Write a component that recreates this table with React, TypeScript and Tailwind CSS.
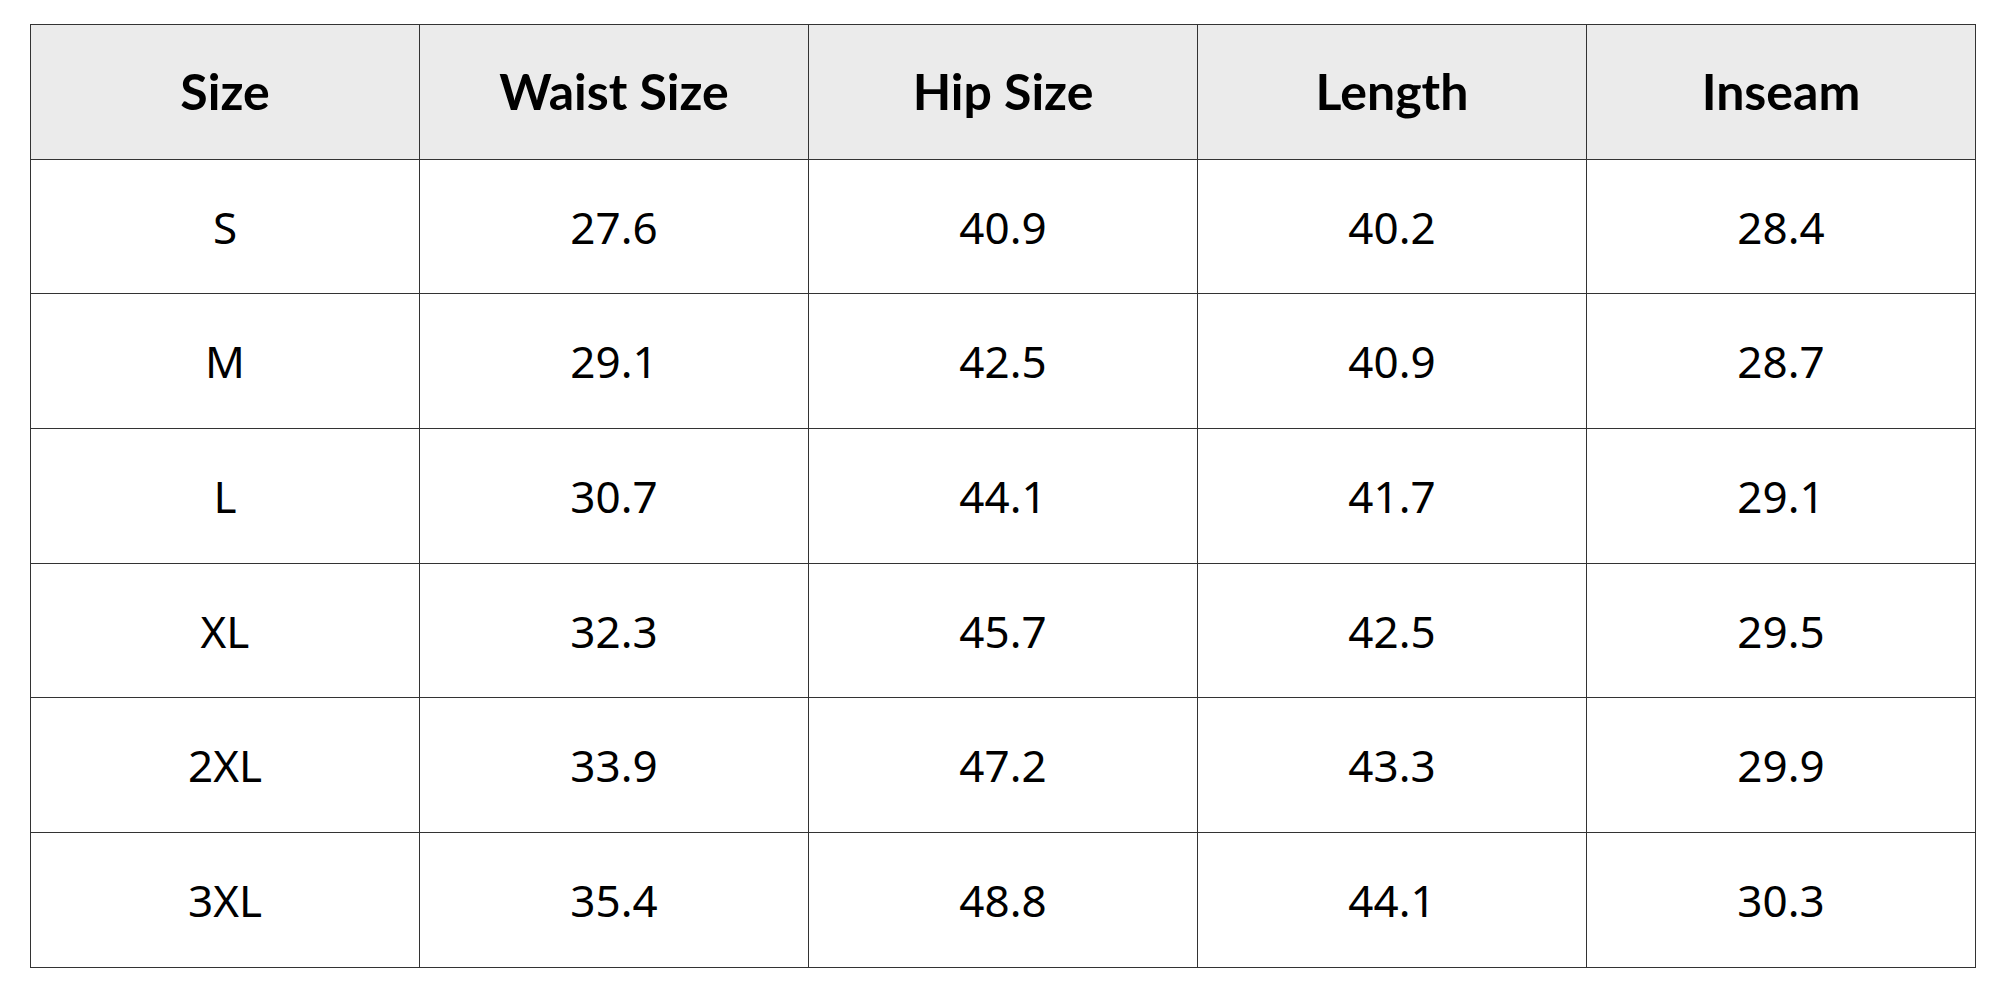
const headers = ['Size', 'Waist Size', 'Hip Size', 'Length', 'Inseam'];

const rows = [
  ['S', '27.6', '40.9', '40.2', '28.4'],
  ['M', '29.1', '42.5', '40.9', '28.7'],
  ['L', '30.7', '44.1', '41.7', '29.1'],
  ['XL', '32.3', '45.7', '42.5', '29.5'],
  ['2XL', '33.9', '47.2', '43.3', '29.9'],
  ['3XL', '35.4', '48.8', '44.1', '30.3'],
];

const cellClass =
  'flex items-center justify-center border-r border-b border-[#333] text-black';

export default function App() {
  return (
    <div className="min-h-screen w-full bg-white pl-[30px] pt-[24px]">
      <div className="grid w-fit grid-cols-[repeat(5,389px)] grid-rows-[repeat(7,134.7px)] border-l border-t border-[#333]">
        {headers.map((h) => (
          <div
            key={h}
            className={`${cellClass} bg-[#ebebeb] font-['Lato','Noto_Sans',sans-serif] text-[50px] font-bold`}
          >
            {h}
          </div>
        ))}
        {rows.map((row) =>
          row.map((v, i) => (
            <div
              key={`${row[0]}-${i}`}
              className={`${cellClass} font-['Noto_Sans','Lato',sans-serif] text-[44px] font-normal`}
            >
              {v}
            </div>
          )),
        )}
      </div>
    </div>
  );
}
